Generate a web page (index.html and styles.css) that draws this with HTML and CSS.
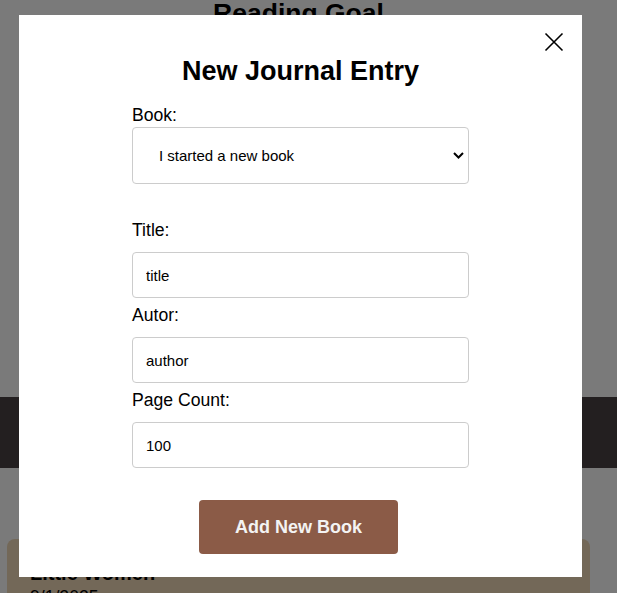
FILE: index.html
```html
<!DOCTYPE html>
<html lang="en">
<head>
<meta charset="utf-8">
<title>Reading Journal</title>
<link rel="stylesheet" href="styles.css">
</head>
<body>
<main class="page">
  <section class="goal">
    <h1 class="goal-title">Reading Goal</h1>
  </section>
  <section class="band"></section>
  <section class="entries">
    <article class="entry-card">
      <h3 class="entry-title">Little Women</h3>
      <p class="entry-date">9/1/2025</p>
    </article>
  </section>
</main>

<div class="overlay">
  <div class="modal">
    <button class="close-btn" aria-label="Close">
      <svg width="20" height="20" viewBox="0 0 20 20"><path d="M1.5 1.5 L18.5 18.5 M18.5 1.5 L1.5 18.5" stroke="#000" stroke-width="1.6" fill="none"/></svg>
    </button>
    <h2 class="modal-title">New Journal Entry</h2>
    <form class="entry-form">
      <label class="field-label label-book" for="book">Book:</label>
      <div class="select-wrap">
        <select id="book" class="field-select">
          <option>I started a new book</option>
        </select>
        <svg class="chevron" width="11" height="7" viewBox="0 0 11 7"><path d="M1 1 L5.5 5.5 L10 1" stroke="#000" stroke-width="2" fill="none"/></svg>
      </div>
      <label class="field-label label-first" for="title">Title:</label>
      <input id="title" class="field-input" type="text" value="title">
      <label class="field-label" for="author">Autor:</label>
      <input id="author" class="field-input" type="text" value="author">
      <label class="field-label" for="pages">Page Count:</label>
      <input id="pages" class="field-input" type="text" value="100">
      <button type="button" class="submit-btn">Add New Book</button>
    </form>
  </div>
</div>
</body>
</html>
```

FILE: styles.css
```css
* { box-sizing: border-box; }

html, body {
  margin: 0;
  padding: 0;
  background: #ffffff;
  font-family: "Liberation Sans", Arial, sans-serif;
  color: #000;
}

.page {
  display: flex;
  flex-direction: column;
  height: 593px;
  overflow: hidden;
}

.goal {
  height: 397px;
  flex: none;
}

.goal-title {
  margin: 0 20px 0 0;
  text-align: center;
  font-size: 26.5px;
  line-height: 26px;
  font-weight: bold;
}

.band {
  flex: none;
  height: 71px;
  background: #4a4144;
}

.entries {
  flex: none;
  padding: 71px 27px 0 7px;
}

.entry-card {
  background: #f0d9b8;
  border-radius: 8px;
  padding: 22px 23px 20px;
  height: 120px;
}

.entry-title {
  margin: 0;
  font-size: 20px;
  line-height: 24px;
  font-weight: bold;
}

.entry-date {
  margin: 2px 0 0;
  font-size: 17.6px;
  line-height: 20px;
}

.overlay {
  position: fixed;
  inset: 0;
  background: rgba(0, 0, 0, 0.52);
  padding: 15px 0 0 19px;
}

.modal {
  position: relative;
  width: 563px;
  height: 562px;
  background: #ffffff;
  padding-top: 41px;
}

.close-btn {
  position: absolute;
  top: 17px;
  right: 18px;
  width: 20px;
  height: 20px;
  padding: 0;
  border: none;
  background: none;
  display: block;
}

.close-btn svg { display: block; }

.modal-title {
  margin: 0;
  text-align: center;
  font-size: 27px;
  line-height: 31px;
  font-weight: bold;
}

.entry-form {
  width: 337px;
  margin: 0 auto;
  display: flex;
  flex-direction: column;
}

.entry-form > * { flex: none; }

.field-label {
  display: block;
  font-size: 17.6px;
  line-height: 20px;
  margin: 7px 0 12px;
}

.label-book {
  margin: 18px 0 2px;
}

.label-first {
  margin-top: 36px;
}

.select-wrap {
  position: relative;
}

.field-select {
  appearance: none;
  -webkit-appearance: none;
  display: block;
  width: 100%;
  height: 57px;
  border: 1px solid #cccccc;
  border-radius: 4px;
  background: #fff;
  padding: 0 30px 0 26px;
  font-family: "Liberation Sans", Arial, sans-serif;
  font-size: 15px;
  color: #000;
}

.chevron {
  position: absolute;
  right: 5px;
  top: 25px;
  pointer-events: none;
}

.field-input {
  display: block;
  width: 100%;
  height: 46px;
  border: 1px solid #cccccc;
  border-radius: 4px;
  padding: 0 13px;
  font-family: "Liberation Sans", Arial, sans-serif;
  font-size: 15px;
  color: #000;
  background: #fff;
}

.submit-btn {
  align-self: center;
  margin: 32px 4px 0 0;
  width: 199px;
  height: 54px;
  border: none;
  border-radius: 4px;
  background: #8b5b47;
  color: #f3f3f3;
  font-family: "Liberation Sans", Arial, sans-serif;
  font-size: 18px;
  font-weight: bold;
  padding: 0;
}
```
